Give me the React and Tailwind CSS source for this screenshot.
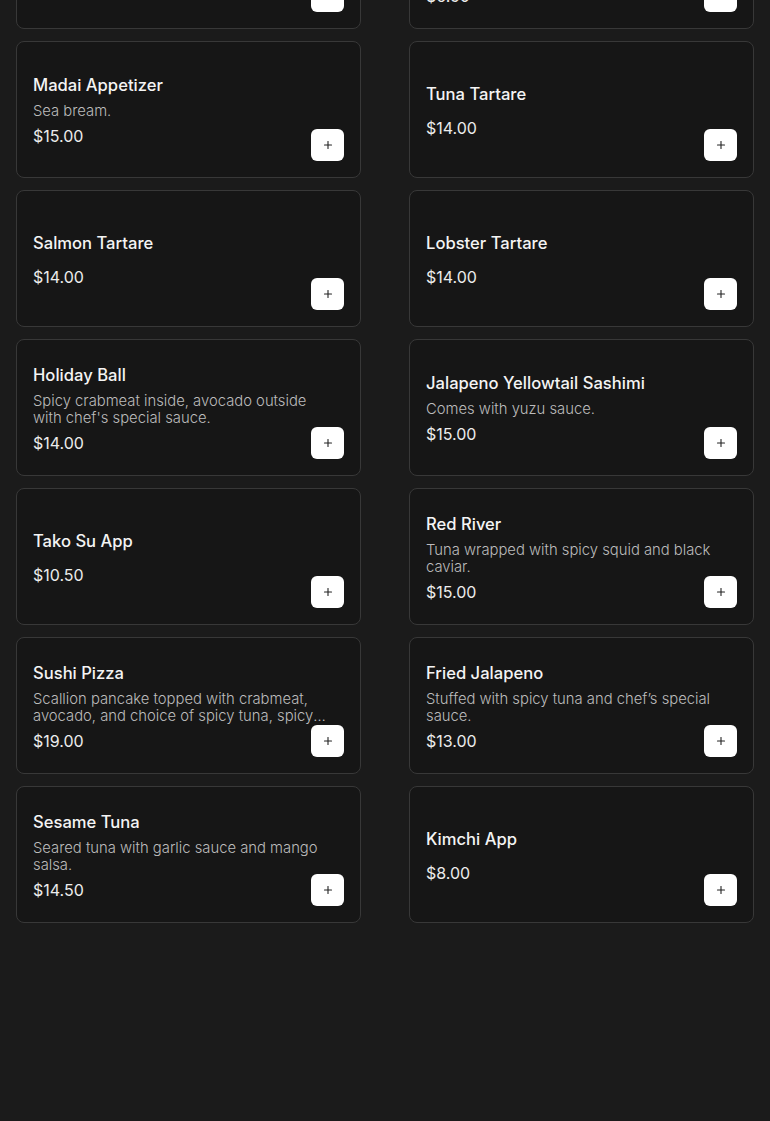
import React from 'react';
import {Plus} from 'lucide-react';

const items = [
  {name: 'Gyoza', desc: 'Pan-fried pork dumplings.', price: '$7.00'},
  {name: 'Shumai', desc: 'Steamed shrimp dumplings served with ponzu sauce on the side.', price: '$6.50'},
  {name: 'Madai Appetizer', desc: 'Sea bream.', price: '$15.00'},
  {name: 'Tuna Tartare', desc: '', price: '$14.00'},
  {name: 'Salmon Tartare', desc: '', price: '$14.00'},
  {name: 'Lobster Tartare', desc: '', price: '$14.00'},
  {name: 'Holiday Ball', desc: "Spicy crabmeat inside, avocado outside with chef's special sauce.", price: '$14.00'},
  {name: 'Jalapeno Yellowtail Sashimi', desc: 'Comes with yuzu sauce.', price: '$15.00'},
  {name: 'Tako Su App', desc: '', price: '$10.50'},
  {name: 'Red River', desc: 'Tuna wrapped with spicy squid and black caviar.', price: '$15.00'},
  {
    name: 'Sushi Pizza',
    desc: 'Scallion pancake topped with crabmeat, avocado, and choice of spicy tuna, spicy salmon, or spicy yellowtail.',
    price: '$19.00',
  },
  {name: 'Fried Jalapeno', desc: 'Stuffed with spicy tuna and chef’s special sauce.', price: '$13.00'},
  {name: 'Sesame Tuna', desc: 'Seared tuna with garlic sauce and mango salsa.', price: '$14.50'},
  {name: 'Kimchi App', desc: '', price: '$8.00'},
];

function MenuCard({item}) {
  return (
    <div className="grid h-[137px] rounded-lg border border-[#383838] bg-[#161616] p-4">
      <div className="[grid-area:1/1] flex flex-col self-center">
        <span className="text-[16.6px] leading-7 font-medium text-[#f4f4f4]">{item.name}</span>
        <p className="mt-1 max-w-[300px] text-[14.8px] leading-[17px] font-light text-[#bcbcbc] line-clamp-2">
          {item.desc}
        </p>
        <span className="mt-1 text-base leading-6 text-[#ececec]">{item.price}</span>
      </div>
      <button className="[grid-area:1/1] self-end justify-self-end flex h-8 w-[33px] items-center justify-center rounded-md bg-white">
        <Plus size={12} strokeWidth={2.2} className="text-[#222]" />
      </button>
    </div>
  );
}

export default function App() {
  return (
    <div className="min-h-screen overflow-hidden bg-[#1b1b1b]" style={{fontFamily: 'Inter, "Noto Sans", sans-serif'}}>
      <div className="-mt-[108px] grid grid-cols-2 gap-x-12 gap-y-3 px-4 pb-[198px]">
        {items.map((item) => (
          <MenuCard key={item.name} item={item} />
        ))}
      </div>
    </div>
  );
}
